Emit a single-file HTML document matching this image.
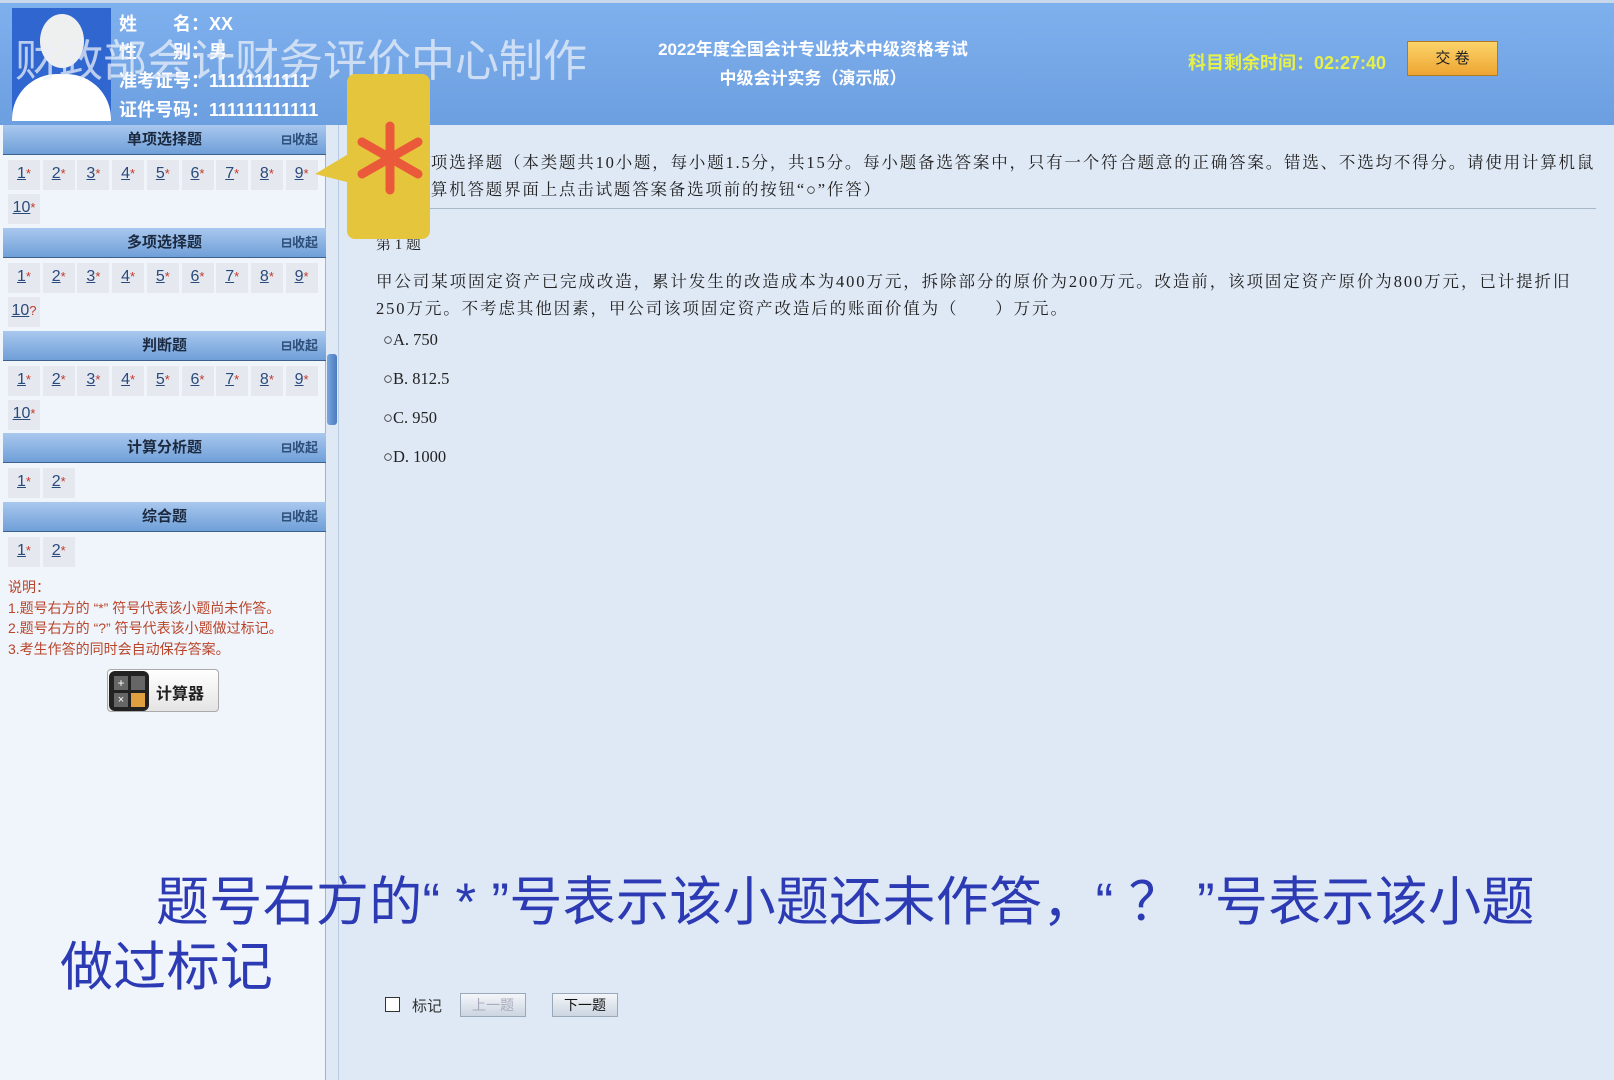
<!DOCTYPE html>
<html><head><meta charset="utf-8"><style>
*{margin:0;padding:0;box-sizing:border-box}
body{width:1614px;height:1080px;overflow:hidden;background:#dfe9f5;font-family:"Liberation Sans","Noto Sans CJK SC",sans-serif;position:relative}
.a{position:absolute;white-space:nowrap}
#hdr{left:0;top:0;width:1614px;height:125px;background:linear-gradient(#7fb0ee,#6c9fe0);border-top:3px solid #c8d8ea}
.info{color:#fff;font-weight:bold;font-size:18px;text-decoration:none}
#side{left:0;top:125px;width:326px;height:955px;background:#f0f4fb;border-right:1px solid #9db5d3}
.sh{position:absolute;left:3px;width:323px;height:30px;background:linear-gradient(#a9c8ee,#6f9fd8);border-bottom:1px solid #3c5f8c;font-weight:bold;font-size:15px;color:#1c2a40;text-align:center;line-height:30px}
.sh span{position:absolute;right:8px;top:0;font-size:13px;color:#2e4f7a}
.c{position:absolute;width:32px;height:30px;background:#e5e9ef;font-size:16px;color:#2a4a7c;text-align:center;line-height:28px}
.c u{text-decoration:underline}
.c i{font-style:normal;color:#c0392b;font-size:13px;vertical-align:top}
#main{left:345px;top:125px;width:1269px;height:955px;background:#dfe9f5}
.q{font-family:"Liberation Serif","Noto Serif CJK SC",serif;font-size:16.5px;color:#222}
.note{color:#b8452a;font-size:14px}
.btn{position:absolute;border:1px solid #9aa9ba;background:linear-gradient(#f4f6f9,#cbd5e1);font-size:14px;text-align:center;line-height:22px}
.big{color:#2c3ab4;font-size:53px;letter-spacing:0.3px}
</style></head><body>
<div id="hdr" class="a"></div>
<div class="a" style="left:12px;top:8px;width:99px;height:113px;background:#2f66d0;overflow:hidden">
<div style="position:absolute;left:28px;top:6px;width:44px;height:54px;border-radius:50%;background:#eef0f0"></div>
<div style="position:absolute;left:0;top:66px;width:99px;height:60px;border-radius:45px 45px 0 0;background:#fff"></div>
</div>
<div class="a info" style="left:119px;top:10px">姓　　名：XX</div>
<div class="a info" style="left:119px;top:38px">性　　别：男</div>
<div class="a info" style="left:119px;top:67px">准考证号：<span>1111111111</span>1</div>
<div class="a info" style="left:119px;top:96px">证件号码：<span>11111111111</span>1</div>
<div class="a" style="left:15px;top:25px;font-size:44px;color:rgba(235,240,248,0.75)">财政部会计财务评价中心制作</div>
<div class="a" style="left:613px;top:35px;width:400px;text-align:center;color:#fff;font-weight:bold;font-size:17px;line-height:29px">2022年度全国会计专业技术中级资格考试<br>中级会计实务（演示版）</div>
<div class="a" style="left:1188px;top:49px;color:#e6f04a;font-weight:bold;font-size:18px">科目剩余时间：02:27:40</div>
<div class="a" style="left:1407px;top:41px;width:91px;height:35px;background:linear-gradient(#fbd46a,#eea531);border:1px solid #b07a24;text-align:center;line-height:33px;font-size:15px;color:#222">交 卷</div>

<div id="side" class="a">
<div class="sh" style="top:0">单项选择题<span>⊟收起</span></div>
<div class="sh" style="top:103px">多项选择题<span>⊟收起</span></div>
<div class="sh" style="top:206px">判断题<span>⊟收起</span></div>
<div class="sh" style="top:308px">计算分析题<span>⊟收起</span></div>
<div class="sh" style="top:377px">综合题<span>⊟收起</span></div>
<div class="a note" style="left:8px;top:452px;line-height:20.5px">说明：<br>1.题号右方的 “*” 符号代表该小题尚未作答。<br>2.题号右方的 “?” 符号代表该小题做过标记。<br>3.考生作答的同时会自动保存答案。</div>
<div class="a" style="left:107px;top:544px;width:112px;height:43px;border:1px solid #aaa;border-radius:4px;background:linear-gradient(#fff,#e4e4e4)">
<div style="position:absolute;left:1px;top:1px;width:40px;height:40px;border-radius:6px;background:#222"></div>
<div style="position:absolute;left:6px;top:6px;width:14px;height:14px;background:#666;color:#fff;font-size:12px;line-height:14px;text-align:center">+</div>
<div style="position:absolute;left:23px;top:6px;width:14px;height:14px;background:#666"></div>
<div style="position:absolute;left:6px;top:23px;width:14px;height:14px;background:#666;color:#fff;font-size:11px;line-height:14px;text-align:center">×</div>
<div style="position:absolute;left:23px;top:23px;width:14px;height:14px;background:#e0a040"></div>
<div style="position:absolute;left:48px;top:10px;font-size:16px;font-weight:bold;color:#222">计算器</div>
</div>
</div>
<div class="a" style="left:327px;top:354px;width:10px;height:71px;background:linear-gradient(90deg,#7aa6dc,#4a7bc0);border-radius:3px"></div>
<div class="a" style="left:338px;top:125px;width:1px;height:955px;background:#b9cbe2"></div>
<div id="main" class="a"></div>
<div id="cells"></div>

<div class="a q" style="left:376px;top:149px;line-height:27px;letter-spacing:1.8px">一、单项选择题（本类题共10小题，每小题1.5分，共15分。每小题备选答案中，只有一个符合题意的正确答案。错选、不选均不得分。请使用计算机鼠<br>标在计算机答题界面上点击试题答案备选项前的按钮“○”作答）</div>
<div class="a" style="left:376px;top:208px;width:1220px;height:1px;background:#a9b8c9"></div>
<div class="a q" style="left:376px;top:233px;font-size:15px">第 1 题</div>
<div class="a q" style="left:376px;top:268px;line-height:27px;letter-spacing:1.9px">甲公司某项固定资产已完成改造，累计发生的改造成本为400万元，拆除部分的原价为200万元。改造前，该项固定资产原价为800万元，已计提折旧<br>250万元。不考虑其他因素，甲公司该项固定资产改造后的账面价值为（　　）万元。</div>
<div class="a q" style="left:383px;top:330px">○A.  750</div>
<div class="a q" style="left:383px;top:369px">○B.  812.5</div>
<div class="a q" style="left:383px;top:408px">○C.  950</div>
<div class="a q" style="left:383px;top:447px">○D.  1000</div>

<div class="a" style="left:347px;top:74px;width:83px;height:165px;background:#e5c53c;border-radius:8px"></div>
<svg class="a" style="left:315px;top:150px" width="40" height="40"><polygon points="40,0 0,24 40,34" fill="#e5c53c"/></svg>
<svg class="a" style="left:352px;top:120px" width="76" height="76"><g stroke="#ea5a3a" stroke-width="9" stroke-linecap="round"><line x1="38" y1="6" x2="38" y2="70"/><line x1="10" y1="22" x2="66" y2="54"/><line x1="10" y1="54" x2="66" y2="22"/></g></svg>

<div class="a big" style="left:156px;top:860px">题号右方的“ * ”号表示该小题还未作答，“ ？ ”号表示该小题</div>
<div class="a big" style="left:60px;top:925px">做过标记</div>

<div class="a" style="left:385px;top:997px;width:15px;height:15px;border:1px solid #333;background:#fff"></div>
<div class="a" style="left:412px;top:995px;font-size:15px;color:#333">标记</div>
<div class="btn" style="left:460px;top:993px;width:66px;height:24px;color:#aab">上一题</div>
<div class="btn" style="left:552px;top:993px;width:66px;height:24px;color:#111">下一题</div>

<script>
var rows=[[160,9,'*'],[194,1,'*'],[263,9,'*'],[297,1,'?'],[366,9,'*'],[400,1,'*'],[468,2,'*'],[537,2,'*']];
var h='';
for(var r=0;r<rows.length;r++){var t=rows[r][0],n=rows[r][1];
 if(n==1){h+='<div class="c" style="left:8px;top:'+t+'px"><u>10</u><i>'+rows[r][2]+'</i></div>';}
 else for(var k=0;k<n;k++){h+='<div class="c" style="left:'+(8+k*34.7)+'px;top:'+t+'px"><u>'+(k+1)+'</u><i>*</i></div>';}}
document.getElementById('cells').innerHTML=h;
</script>
</body></html>
